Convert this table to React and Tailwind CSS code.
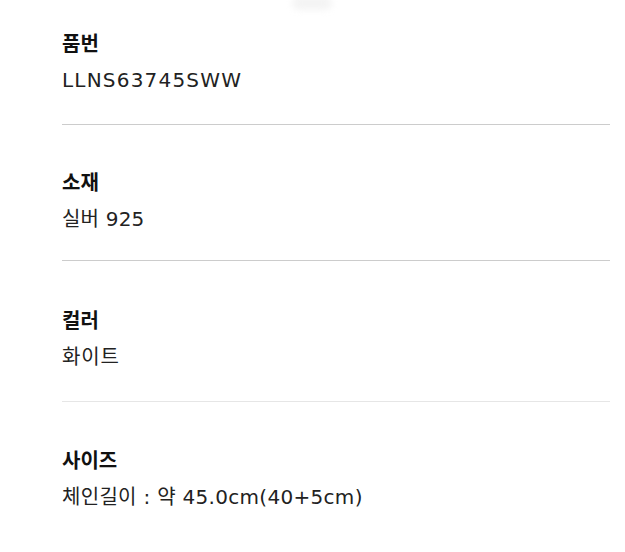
import React from "react";

const rows = [
  { title: "품번", value: "LLNS63745SWW", box: "pt-[29px] pb-[29px] border-b border-[#cccccc]", track: "tracking-[1.2px]" },
  { title: "소재", value: "실버 925", box: "pt-[43px] pb-[26px] border-b border-[#cccccc]", track: "tracking-[0.2px]" },
  { title: "컬러", value: "화이트", box: "pt-[45px] pb-[29px] border-b border-[#e6e6e6]", track: "tracking-[0.8px]" },
  { title: "사이즈", value: "체인길이 : 약 45.0cm(40+5cm)", box: "pt-[44px]", track: "tracking-[0.3px]" },
];

export default function App() {
  return (
    <div className="relative w-[625px] h-[552px] bg-white overflow-hidden font-['Noto_Sans','Noto_Sans_CJK_KR',sans-serif]">
      <div className="absolute left-[292px] top-[-4px] w-[40px] h-[14px] rounded-full bg-[#f4f4f4] blur-[3px]" />
      <div className="ml-[62px] mr-[15px]">
        {rows.map((row, i) => (
          <div key={i} className={row.box}>
            <div className="text-[20px] leading-[30px] font-bold text-[#111111]">
              {row.title}
            </div>
            <div
              className={`mt-[6px] text-[20px] leading-[30px] text-[#222222] font-['DejaVu_Sans','Noto_Sans_CJK_KR',sans-serif] ${row.track}`}
            >
              {row.value}
            </div>
          </div>
        ))}
      </div>
    </div>
  );
}
